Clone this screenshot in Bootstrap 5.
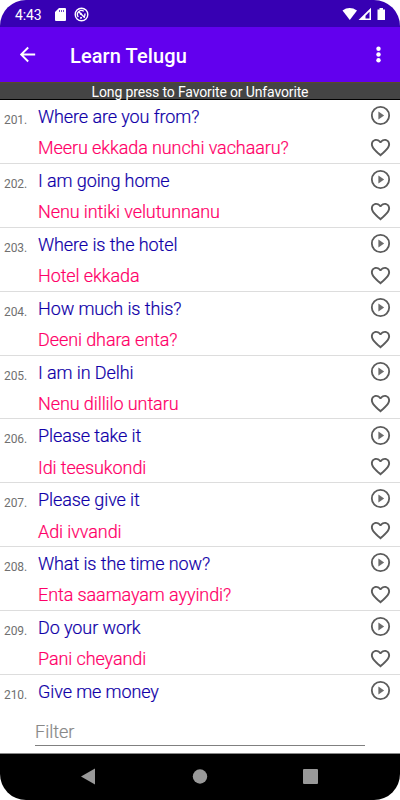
<!DOCTYPE html>
<html lang="en">
<head>
<meta charset="utf-8">
<meta name="viewport" content="width=device-width, initial-scale=1">
<title>Learn Telugu</title>
<link href="https://cdn.jsdelivr.net/npm/bootstrap@5.3.0/dist/css/bootstrap.min.css" rel="stylesheet">
<style>
body{font-family:Roboto,"Liberation Sans",sans-serif;background:#fff}
svg{display:block;flex:none}
.phone{width:400px;height:800px;border-radius:26px;overflow:hidden}
.status{height:27px;background:#3700b3;font-size:14px;padding:1px 14px 0 15px}
.clock{padding-top:2px;width:27px;letter-spacing:-.1px}
.sd-icon{margin-left:13px}
.ring-icon{margin-left:8px}
.appbar{height:54.5px;background:#6200ee;padding:0 10px 0 16px}
.title{font-size:20px;font-weight:500;margin-left:31px;letter-spacing:.1px;padding-top:3px}
.hint{height:18.5px;background:#444;border-top:1px solid #5b4a28;border-bottom:1px solid #000;font-size:14px;letter-spacing:-.14px;line-height:18px}
.phrases{height:607px}
.phrase{height:63.9px;border-bottom:1.4px solid #ddd;padding:0 8px 0 4px}
.num{width:34px;font-size:12px;color:#707070;letter-spacing:-.1px;line-height:18px;padding-top:11px}
.line{height:31.3px;font-size:18px;font-weight:300;line-height:31px;letter-spacing:-.09px;-webkit-text-stroke:.2px}
.line span{padding-top:1.6px}
.en{color:#1000a8}
.te{color:#ff0068}
.te svg{margin-top:1px}
.filter{height:46px;padding:0 35px}
.filter input{height:39px;padding:10px 0 0!important;border-bottom:1px solid #808080!important;font-size:18px;font-weight:300;outline:0}
.filter input::placeholder{color:#888;opacity:1;-webkit-text-stroke:.2px #888}
.sysnav{height:47px;background:#000;border-top:1px solid #888}
</style>
<script src="https://cdn.jsdelivr.net/npm/bootstrap@5.3.0/dist/js/bootstrap.bundle.min.js"></script>
</head>
<body class="overflow-hidden">
<svg width="0" height="0" class="position-absolute">
<symbol id="play" viewBox="0 0 24 24"><path fill="#5c5c5c" d="M12 2a10 10 0 1 0 0 20 10 10 0 0 0 0-20zm0 18.100a8.100 8.100 0 1 1 0-16.200 8.100 8.100 0 0 1 0 16.200z"/><path fill="#6c6c6c" d="M9.800 7.800v8.400l6-4.200z"/></symbol>
<symbol id="heart" viewBox="0 0 24 24"><path fill="#5c5c5c" d="M16.5 3c-1.74 0-3.41.81-4.5 2.09C10.91 3.81 9.24 3 7.5 3 4.42 3 2 5.42 2 8.5c0 3.78 3.4 6.86 8.55 11.54L12 21.35l1.45-1.32C18.6 15.36 22 12.28 22 8.5 22 5.42 19.58 3 16.5 3zm-4.4 15.55l-.1.1-.1-.1C7.14 14.24 4 11.39 4 8.5 4 6.5 5.5 5 7.5 5c1.54 0 3.04.99 3.57 2.36h1.87C13.46 5.99 14.96 5 16.5 5c2 0 3.5 1.5 3.5 3.5 0 2.89-3.14 5.74-7.9 10.05z"/></symbol>
</svg>
<div class="phone d-flex flex-column">
  <div class="status d-flex align-items-center text-white flex-shrink-0">
    <span class="clock">4:43</span>
    <svg class="sd-icon" width="11" height="13" viewBox="0 0 11 13"><path fill="#fff" d="M4 0h6q1 0 1 1v11q0 1-1 1H1q-1 0-1-1V4z"/><path stroke="#3700b3" stroke-opacity=".7" d="M4.500 2v2M6.500 2v2M8.500 2v2"/></svg>
    <svg class="ring-icon" width="15" height="15" viewBox="0 0 15 15" fill="none" stroke="#fff"><circle cx="7.500" cy="7.500" r="6.300" stroke-width="1.400"/><path stroke-width="1.400" d="M4.300 10A4 4 0 0 1 9.800 4.300M4.600 4.600l6.200 6.200M6 7.500l1.500-1.500M10.800 6.500q.6 2-.6 3.700M6 11l2-.2"/></svg>
    <svg class="ms-auto" width="44" height="14" viewBox="0 0 44 14"><path fill="#fff" d="M.500 3.400Q7.500-1.500 15 3.400L7.800 13z"/><path fill="#fff" fill-rule="evenodd" d="M29 .800V13H16.500zM27.500 4.800l-4 4V11.500h4z"/><path fill="#fff" d="M35.500 2.500h2V1h3.500v1.500h2V13h-7.500z"/></svg>
  </div>
  <div class="appbar d-flex align-items-center text-white flex-shrink-0">
    <svg width="23" height="23" viewBox="0 0 24 24"><path fill="#fff" d="M20 11H7.830l5.590-5.590L12 4l-8 8 8 8 1.410-1.410L7.830 13H20z"/></svg>
    <h1 class="title mb-0">Learn Telugu</h1>
    <svg class="ms-auto" width="23" height="23" viewBox="0 0 24 24" fill="#fff"><circle cx="12" cy="6" r="2.300"/><circle cx="12" cy="12" r="2.300"/><circle cx="12" cy="18" r="2.300"/></svg>
  </div>
  <div class="hint text-white text-center flex-shrink-0">Long press to Favorite or Unfavorite</div>
  <div class="phrases overflow-hidden flex-shrink-0" id="phrases"></div>
  <div class="filter flex-shrink-0"><input class="w-100 border-0 d-block bg-transparent" type="text" placeholder="Filter" aria-label="Filter"></div>
  <div class="sysnav d-flex flex-shrink-0 justify-content-between align-items-center px-5">
    <svg width="80" height="20" viewBox="0 0 80 20"><path fill="#999" d="M33 9.500l14-8v16z"/></svg>
    <svg width="20" height="20" viewBox="0 0 20 20"><circle fill="#999" cx="10" cy="9.500" r="7.200"/></svg>
    <svg width="80" height="20" viewBox="0 0 80 20"><rect fill="#999" x="31" y="2" width="15" height="15" rx="1"/></svg>
  </div>
</div>
<script>
const phrases=[["Where are you from?","Meeru ekkada nunchi vachaaru?"],["I am going home","Nenu intiki velutunnanu"],["Where is the hotel","Hotel ekkada"],["How much is this?","Deeni dhara enta?"],["I am in Delhi","Nenu dillilo untaru"],["Please take it","Idi teesukondi"],["Please give it","Adi ivvandi"],["What is the time now?","Enta saamayam ayyindi?"],["Do your work","Pani cheyandi"],["Give me money",""]];
document.getElementById("phrases").innerHTML=phrases.map(([en,te],i)=>`<div class="phrase d-flex"><div class="num flex-shrink-0">${201+i}.</div><div class="flex-grow-1"><div class="line en d-flex align-items-center justify-content-between"><span>${en}</span><svg width="23" height="23"><use href="#play"/></svg></div><div class="line te d-flex align-items-center justify-content-between"><span>${te}</span>${te?'<svg width="23" height="23"><use href="#heart"/></svg>':''}</div></div></div>`).join("");
</script>
</body>
</html>
